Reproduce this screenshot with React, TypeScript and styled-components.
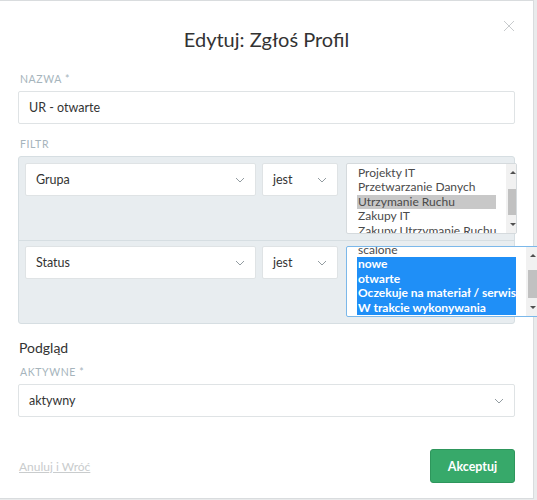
import React from 'react';
import styled, { createGlobalStyle } from 'styled-components';

const GlobalStyle = createGlobalStyle`
  html, body {
    margin: 0;
    padding: 0;
    background: #e9ebec;
  }
  body {
    font-family: Lato, "Open Sans", sans-serif;
    color: #333;
  }
`;

const Modal = styled.div`
  position: relative;
  box-sizing: border-box;
  width: 534px;
  height: 499px;
  background: #fff;
  border: 1px solid #d9dcde;
  border-left: none;
  padding: 0 18px;
  display: flex;
  flex-direction: column;
`;

const Title = styled.h2`
  margin: 0;
  padding-top: 20px;
  height: 36px;
  line-height: 36px;
  text-align: center;
  font-size: 20px;
  font-weight: 400;
  color: #333;
`;

const Close = styled.button`
  position: absolute;
  top: 19px;
  right: 17px;
  width: 14px;
  height: 14px;
  padding: 0;
  border: none;
  background: none;
  cursor: pointer;
`;

const Label = styled.div<{ $top: number }>`
  margin-top: ${p => p.$top}px;
  padding-left: 2px;
  height: 18px;
  line-height: 12px;
  font-size: 10.5px;
  letter-spacing: 0.6px;
  text-transform: uppercase;
  color: #a6b4bc;
`;

const Field = styled.div`
  box-sizing: border-box;
  height: 33px;
  background: #fff;
  border: 1px solid #dfe3e5;
  border-radius: 2px;
  display: flex;
  align-items: center;
  padding: 0 10px;
  font-size: 12.5px;
  color: #333;
`;

const SelectBox = styled(Field)<{ $width: number }>`
  width: ${p => p.$width}px;
  flex: none;
  justify-content: space-between;
`;

const Chevron = () => (
  <svg width="10" height="6" viewBox="0 0 10 6">
    <path d="M1 1l4 4 4-4" fill="none" stroke="#939ca1" strokeWidth="1" />
  </svg>
);

const FilterPanel = styled.div`
  background: #e8edf0;
  border: 1px solid #d6dee2;
  border-radius: 3px;
  display: flex;
  flex-direction: column;
`;

const FilterRow = styled.div<{ $first?: boolean }>`
  height: 83px;
  box-sizing: border-box;
  padding: ${p => (p.$first ? 6 : 5)}px 0 0 6px;
  display: flex;
  gap: 6px;
  align-items: flex-start;
  border-top: ${p => (p.$first ? 'none' : '1px solid #d6dee2')};
`;

const ListBox = styled.div<{ $focused?: boolean; $width: number }>`
  box-sizing: border-box;
  width: ${p => p.$width}px;
  height: 71px;
  margin-left: 2px;
  flex: none;
  display: flex;
  background: #fff;
  border: 1px solid ${p => (p.$focused ? '#7bb8ea' : '#d5dadd')};
  border-radius: 2px;
  overflow: hidden;
`;

const Options = styled.div<{ $offset: number }>`
  flex: 1;
  padding: 0 10px;
  margin-top: ${p => p.$offset}px;
  font-size: 12px;
  line-height: 14.5px;
`;

const Option = styled.div<{ $state?: 'gray' | 'blue' }>`
  white-space: nowrap;
  padding-left: 1px;
  color: ${p => (p.$state === 'blue' ? '#fff' : '#4a4a4a')};
  font-weight: ${p => (p.$state === 'blue' ? 700 : 400)};
  background: ${p =>
    p.$state === 'blue' ? '#1f8ff7' : p.$state === 'gray' ? '#c8c8c8' : 'transparent'};
`;

const ScrollBar = styled.div`
  width: 13px;
  flex: none;
  background: #f1f1f1;
  display: flex;
  flex-direction: column;
  align-items: center;
`;

const Arrow = styled.div<{ $down?: boolean }>`
  width: 0;
  height: 0;
  margin: 7px 0;
  border-left: 3px solid transparent;
  border-right: 3px solid transparent;
  ${p => (p.$down ? 'border-top: 3px solid #505050;' : 'border-bottom: 3px solid #505050;')}
`;

const Track = styled.div`
  flex: 1;
  width: 100%;
  position: relative;
`;

const Thumb = styled.div<{ $top: number; $h: number }>`
  position: absolute;
  left: 2px;
  right: 2px;
  top: ${p => p.$top}px;
  height: ${p => p.$h}px;
  background: #c1c1c1;
`;

const SectionTitle = styled.div`
  margin-top: 13px;
  padding-left: 1px;
  height: 22px;
  line-height: 22px;
  font-size: 14px;
  color: #333;
`;

const Footer = styled.div`
  margin-top: auto;
  margin-bottom: 15px;
  display: flex;
  justify-content: space-between;
  align-items: center;
`;

const CancelLink = styled.a`
  padding-left: 1px;
  font-size: 12px;
  color: #c9cccd;
  text-decoration: underline;
  cursor: pointer;
`;

const AcceptButton = styled.button`
  width: 85px;
  height: 34px;
  background: #37a96a;
  border: 1px solid #2e965c;
  border-radius: 3px;
  color: #fff;
  font-family: inherit;
  font-weight: 700;
  font-size: 12.5px;
  cursor: pointer;
`;

type Opt = { text: string; state?: 'gray' | 'blue' };

const MultiList: React.FC<{
  options: Opt[];
  offset: number;
  width: number;
  focused?: boolean;
  thumbTop: number;
  thumbH: number;
}> = ({ options, offset, width, focused, thumbTop, thumbH }) => (
  <ListBox $focused={focused} $width={width}>
    <Options $offset={offset}>
      {options.map(o => (
        <Option key={o.text} $state={o.state}>
          {o.text}
        </Option>
      ))}
    </Options>
    <ScrollBar>
      <Arrow />
      <Track>
        <Thumb $top={thumbTop} $h={thumbH} />
      </Track>
      <Arrow $down />
    </ScrollBar>
  </ListBox>
);

const groups: Opt[] = [
  { text: 'Projekty IT' },
  { text: 'Przetwarzanie Danych' },
  { text: 'Utrzymanie Ruchu', state: 'gray' },
  { text: 'Zakupy IT' },
  { text: 'Zakupy Utrzymanie Ruchu' },
];

const statuses: Opt[] = [
  { text: 'scalone' },
  { text: 'nowe', state: 'blue' },
  { text: 'otwarte', state: 'blue' },
  { text: 'Oczekuje na materiał / serwis', state: 'blue' },
  { text: 'W trakcie wykonywania', state: 'blue' },
];

export default function App() {
  return (
    <>
      <GlobalStyle />
      <Modal>
        <Title>Edytuj: Zgłoś Profil</Title>
        <Close aria-label="Zamknij">
          <svg width="12" height="12" viewBox="0 0 12 12">
            <path d="M1 1l10 10M11 1L1 11" stroke="#c8cbcd" strokeWidth="1" />
          </svg>
        </Close>

        <Label $top={16}>Nazwa *</Label>
        <Field>UR - otwarte</Field>

        <Label $top={14}>Filtr</Label>
        <FilterPanel>
          <FilterRow $first>
            <SelectBox $width={231}>
              Grupa
              <Chevron />
            </SelectBox>
            <SelectBox $width={76}>
              jest
              <Chevron />
            </SelectBox>
            <MultiList options={groups} offset={1.5} width={171} thumbTop={8} thumbH={26} />
          </FilterRow>
          <FilterRow>
            <SelectBox $width={231}>
              Status
              <Chevron />
            </SelectBox>
            <SelectBox $width={76}>
              jest
              <Chevron />
            </SelectBox>
            <MultiList
              options={statuses}
              offset={-4.5}
              width={193}
              focused
              thumbTop={6}
              thumbH={28}
            />
          </FilterRow>
        </FilterPanel>

        <SectionTitle>Podgląd</SectionTitle>
        <Label $top={7}>Aktywne *</Label>
        <SelectBox $width={497}>
          aktywny
          <Chevron />
        </SelectBox>

        <Footer>
          <CancelLink>Anuluj i Wróć</CancelLink>
          <AcceptButton>Akceptuj</AcceptButton>
        </Footer>
      </Modal>
    </>
  );
}
